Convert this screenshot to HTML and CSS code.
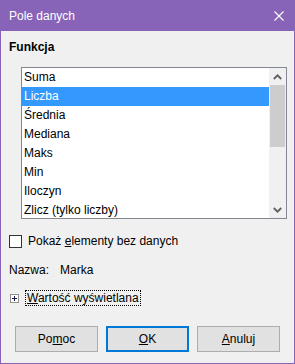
FILE: index.html
```html
<!DOCTYPE html>
<html lang="pl">
<head>
    <meta charset="UTF-8">
    <title>Pole danych</title>
    <link rel="stylesheet" href="styles.css">
</head>
<body>
    <div class="window">
        <div class="titlebar">
            <span class="title">Pole danych</span>
            <svg class="close" width="10" height="10" viewBox="0 0 10 10">
                <path d="M0.5 0.5 L9.5 9.5 M9.5 0.5 L0.5 9.5" stroke="#fff" stroke-width="1.1" fill="none"/>
            </svg>
        </div>
        <div class="content">
            <div class="section-label">Funkcja</div>
            <div class="listbox">
                <ul class="items">
                    <li>Suma</li>
                    <li class="selected">Liczba</li>
                    <li>Średnia</li>
                    <li>Mediana</li>
                    <li>Maks</li>
                    <li>Min</li>
                    <li>Iloczyn</li>
                    <li>Zlicz (tylko liczby)</li>
                </ul>
                <div class="scrollbar">
                    <div class="arrow">
                        <svg width="9" height="6" viewBox="0 0 9 6"><path d="M0.8 5 L4.5 1.3 L8.2 5" stroke="#606060" stroke-width="1.8" fill="none"/></svg>
                    </div>
                    <div class="track">
                        <div class="thumb"></div>
                    </div>
                    <div class="arrow">
                        <svg width="9" height="6" viewBox="0 0 9 6"><path d="M0.8 1 L4.5 4.7 L8.2 1" stroke="#606060" stroke-width="1.8" fill="none"/></svg>
                    </div>
                </div>
            </div>

            <label class="check-row">
                <span class="checkbox"></span>
                <span>Pokaż <u>e</u>lementy bez danych</span>
            </label>

            <div class="name-row">
                <span class="name-label">Nazwa:</span>
                <span>Marka</span>
            </div>

            <div class="expander">
                <span class="plus-box">
                    <svg width="9" height="9" viewBox="0 0 9 9">
                        <rect x="0.5" y="0.5" width="8" height="8" fill="#fff" stroke="#919191"/>
                        <path d="M2 4.5 H7 M4.5 2 V7" stroke="#1a1a50" stroke-width="1"/>
                    </svg>
                </span>
                <span class="focus-text"><u>W</u>artość wyświetlana</span>
            </div>

            <div class="buttons">
                <button class="btn">Po<u>m</u>oc</button>
                <button class="btn default"><u>O</u>K</button>
                <button class="btn"><u>A</u>nuluj</button>
            </div>
        </div>
    </div>
</body>
</html>
```

FILE: styles.css
```css
body {
    margin: 0;
    font-family: "Liberation Sans", Arial, sans-serif;
    font-size: 12px;
    color: #000;
}
.window {
    width: 295px;
    height: 364px;
    box-sizing: border-box;
    border: 1px solid #8764b8;
    border-top: none;
    background: #f0f0f0;
    display: flex;
    flex-direction: column;
}
.titlebar {
    height: 31px;
    flex: none;
    background: #8764b8;
    color: #fff;
    display: flex;
    align-items: center;
    justify-content: space-between;
    padding: 0 10px 0 8px;
    font-size: 12px;
}
.content {
    padding: 8px 7px 0 8px;
    display: flex;
    flex-direction: column;
}
.section-label {
    font-weight: bold;
    line-height: 16px;
}
.listbox {
    margin: 12px 0 0 12px;
    height: 152px;
    box-sizing: border-box;
    border: 1px solid #828790;
    background: #fff;
    display: flex;
}
.items {
    list-style: none;
    margin: 0;
    padding: 0;
    flex: 1;
    overflow: hidden;
}
.items li {
    height: 19px;
    line-height: 19px;
    padding-left: 2px;
}
.items li.selected {
    background: #3399ff;
    color: #fff;
}
.scrollbar {
    width: 17px;
    background: #f0f0f0;
    display: flex;
    flex-direction: column;
}
.arrow {
    height: 17px;
    display: flex;
    align-items: center;
    justify-content: center;
}
.track {
    flex: 1;
}
.thumb {
    height: 62px;
    background: #cdcdcd;
    margin: 0 1px;
}
.check-row {
    margin-top: 14px;
    display: flex;
    align-items: center;
    gap: 6px;
    line-height: 16px;
}
.checkbox {
    width: 13px;
    height: 13px;
    box-sizing: border-box;
    border: 1px solid #333;
    background: #fff;
}
.name-row {
    margin-top: 13px;
    display: flex;
    line-height: 16px;
}
.name-label {
    width: 51px;
}
.expander {
    margin-top: 12px;
    display: flex;
    align-items: center;
    gap: 6px;
    padding-left: 1px;
}
.plus-box {
    display: flex;
}
.focus-text {
    border: 1px dotted #000;
    padding: 0 1px;
    line-height: 14px;
}
.buttons {
    margin-top: 20px;
    display: flex;
    gap: 8px;
    padding-left: 6px;
}
.btn {
    width: 83px;
    height: 26px;
    font: inherit;
    background: #e1e1e1;
    border: 1px solid #adadad;
    padding: 0;
    color: #000;
}
.btn.default {
    border: 2px solid #0078d7;
}
```
